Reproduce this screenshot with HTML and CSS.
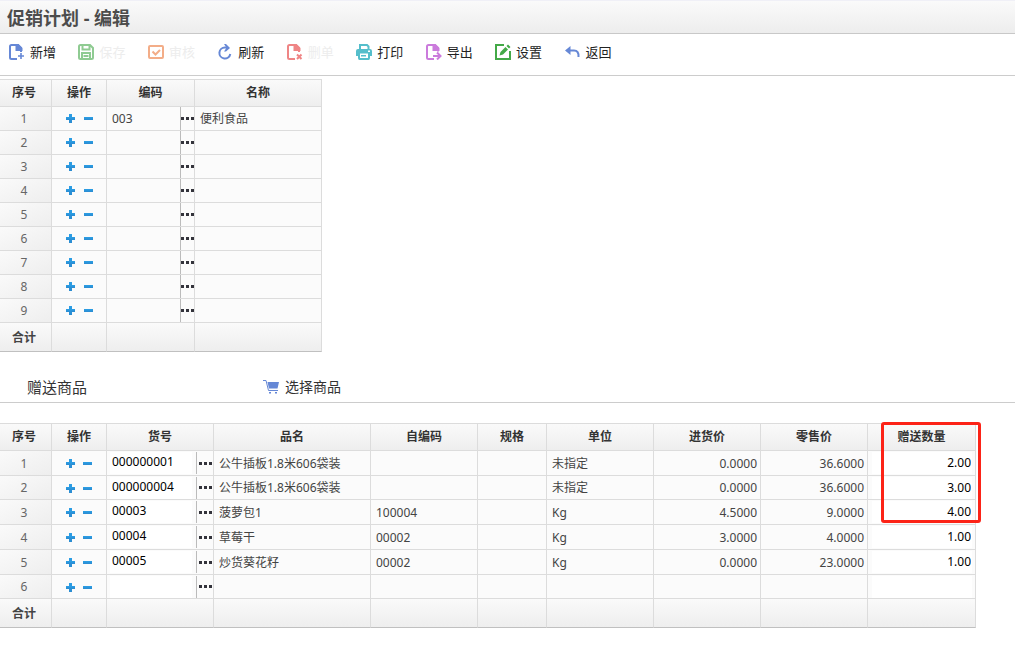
FILE: index.html
```html
<!DOCTYPE html>
<html lang="zh-CN">
  <head>
    <meta charset="UTF-8" />
    <meta name="viewport" content="width=device-width, initial-scale=1.0" />
    <title>促销计划 - 编辑</title>
    <link rel="stylesheet" href="styles.css">
  </head>
  <body>
    <header class="page-header">
      <h1 class="page-title">促销计划 - 编辑</h1>
    </header>

    <nav class="toolbar">
      <div class="toolbar-items">
        <button class="tool" type="button">
          <svg class="icon blue" viewBox="0 0 16 16"><path class="line" d="M8 15H2.500Q1 15 1 13.500V2.500Q1 1 2.500 1H9L12 4V8"/><path d="M6.500 0H9.500L13.500 4V7H6.500zM11.200 9H12.800V11.200H15V12.800H12.800V15H11.200V12.800H9V11.200H11.200z"/></svg>
          新增
        </button>
        <button class="tool" type="button" disabled>
          <svg class="icon green" viewBox="0 0 16 16"><path class="line" d="M2.500 1H12L15 4V13.500Q15 15 13.500 15H2.500Q1 15 1 13.500V2.500Q1 1 2.500 1zM4.500 1V5.500H11.500V1M4 15V9H12V15M5.500 12H10.500"/></svg>
          保存
        </button>
        <button class="tool" type="button" disabled>
          <svg class="icon orange" viewBox="0 0 16 16"><rect class="line" x="1" y="2" width="14" height="12" rx="1"/><path class="line" d="M4.500 7.500L7.500 10.500L12 6"/></svg>
          审核
        </button>
        <button class="tool" type="button">
          <svg class="icon blue" viewBox="0 0 16 16"><path class="line" d="M9.500 3.500H8A5.500 5.500 0 1 0 13.300 10"/><path d="M7 0H9L13 4L9 7.500H7L9 4.500V3z"/></svg>
          刷新
        </button>
        <button class="tool" type="button" disabled>
          <svg class="icon red" viewBox="0 0 16 16"><path class="line" d="M8 15H2.500Q1 15 1 13.500V2.500Q1 1 2.500 1H9L12 4V8M10 10.500L14.500 15M14.500 10.500L10 15"/><path d="M6.500 0H9.500L13.500 4V7H6.500z"/></svg>
          删单
        </button>
        <button class="tool" type="button">
          <svg class="icon teal" viewBox="0 0 16 16"><path class="line" d="M4 5V1H11L12.500 2.500V5"/><path fill-rule="evenodd" d="M2 5H14Q16 5 16 7V12H14V14Q14 16 12.500 16H3.500Q2 16 2 14V12H0V7Q0 5 2 5zM4 9.500V14H12V9.500zM12 6.500V8H14V6.500z"/><path d="M5 11H10V12.500H5z"/></svg>
          打印
        </button>
        <button class="tool" type="button">
          <svg class="icon purple" viewBox="0 0 16 16"><path class="line" d="M8 15H2.500Q1 15 1 13.500V2.500Q1 1 2.500 1H9L12 4V7.500M7 12H13M11 8.500L14.500 12L11 15.500"/><path d="M6.500 0H9.500L13.500 4V7H6.500z"/></svg>
          导出
        </button>
        <button class="tool" type="button">
          <svg class="icon grass" viewBox="0 0 16 16"><path class="line" d="M9 1H1V15H15V7"/><path d="M4.500 11.500L5.500 8L10.500 3L13 5.500L8 10.500zM11.500 2L13 .500L15.500 3L14 4.500z"/></svg>
          设置
        </button>
        <button class="tool" type="button">
          <svg class="icon blue" viewBox="0 0 16 16"><path class="line" d="M4 6.500H9Q14 6.500 13.500 13"/><path d="M0 6.500L5.500 2V11z"/></svg>
          返回
        </button>
      </div>
    </nav>

    <main>
      <div class="grid-wrap">
        <table class="grid">
          <colgroup>
            <col class="col-no"><col class="col-op"><col class="col-code"><col class="col-title">
          </colgroup>
          <thead>
            <tr><th>序号</th><th>操作</th><th>编码</th><th>名称</th></tr>
          </thead>
          <tbody id="category-rows"></tbody>
          <tfoot>
            <tr><th>合计</th><td></td><td></td><td></td></tr>
          </tfoot>
        </table>
      </div>

      <div class="section-bar">
        <h2 class="section-title">赠送商品</h2>
        <button class="pick-button" type="button">
          <svg class="icon blue" viewBox="0 0 16 16"><path class="line thin" d="M0 1.500H3L5.500 11.500H15"/><path d="M4.500 3H16L14.500 9.500H6zM6 13H8V14.500H6zM12 13H14V14.500H12z"/></svg>
          选择商品
        </button>
      </div>

      <div class="grid-wrap">
        <table class="grid goods">
          <colgroup>
            <col class="col-no"><col class="col-op"><col class="col-mid"><col class="col-name"><col class="col-mid"><col class="col-spec"><col class="col-mid"><col class="col-mid"><col class="col-mid"><col class="col-qty">
          </colgroup>
          <thead>
            <tr><th>序号</th><th>操作</th><th>货号</th><th>品名</th><th>自编码</th><th>规格</th><th>单位</th><th>进货价</th><th>零售价</th><th>赠送数量</th></tr>
          </thead>
          <tbody id="goods-rows"></tbody>
          <tfoot>
            <tr><th>合计</th><td></td><td></td><td></td><td></td><td></td><td></td><td></td><td></td><td></td></tr>
          </tfoot>
        </table>
        <div class="highlight"></div>
      </div>
    </main>

    <script>
      const categories = [['003', '便利食品']];
      const goods = [
        ['000000001', '公牛插板1.8米606袋装', '', '', '未指定', '0.0000', '36.6000', '2.00'],
        ['000000004', '公牛插板1.8米606袋装', '', '', '未指定', '0.0000', '36.6000', '3.00'],
        ['00003', '菠萝包1', '100004', '', 'Kg', '4.5000', '9.0000', '4.00'],
        ['00004', '草莓干', '00002', '', 'Kg', '3.0000', '4.0000', '1.00'],
        ['00005', '炒货葵花籽', '00002', '', 'Kg', '0.0000', '23.0000', '1.00'],
      ];

      function rowStart(no, label, code) {
        return `
          <th>${no}</th>
          <td><div class="ops">
            <button class="op add" type="button" aria-label="增加一行"></button>
            <button class="op remove" type="button" aria-label="删除一行"></button>
          </div></td>
          <td class="lookup-cell"><div class="lookup">
            <input type="text" aria-label="${label} ${no}" value="${code}">
            <button class="more" type="button" aria-label="选择${label}"><svg viewBox="0 0 13 3"><path d="M0 0H3V3H0zM5 0H8V3H5zM10 0H13V3H10z"/></svg></button>
          </div></td>`;
      }

      let html = '';
      for (let i = 0; i < 9; i++) {
        const [code, name] = categories[i] || ['', ''];
        html += `<tr>${rowStart(i + 1, '编码', code)}<td>${name}</td></tr>`;
      }
      document.getElementById('category-rows').innerHTML = html;

      html = '';
      for (let i = 0; i < 6; i++) {
        const [code, name, own, spec, unit, cost, price, qty] = goods[i] || Array(8).fill('');
        html += `<tr>${rowStart(i + 1, '货号', code)}
          <td>${name}</td><td>${own}</td><td>${spec}</td><td>${unit}</td>
          <td class="num">${cost}</td><td class="num">${price}</td>
          <td class="qty"><input type="text" aria-label="赠送数量 ${i + 1}" value="${qty}"></td></tr>`;
      }
      document.getElementById('goods-rows').innerHTML = html;
    </script>
  </body>
</html>
```
FILE: styles.css
```css
* {
  margin: 0;
  padding: 0;
  box-sizing: border-box;
}

body {
  font-family: "Noto Sans", "Noto Sans CJK SC", sans-serif;
  font-size: 12px;
  line-height: 16px;
  color: #444;
  background-color: #fff;
}

button,
input {
  font: inherit;
  color: inherit;
  background: none;
  border: none;
}

button {
  cursor: pointer;
}

.page-header {
  height: 34px;
  padding: 2px 7px 0;
  display: flex;
  align-items: center;
  border-top: 1px solid #f0f0f7;
  border-bottom: 1px solid #c8c8c8;
  background-image: linear-gradient(#fafafa, #ededed);
}

.page-title {
  font-size: 18px;
  line-height: 24px;
  color: #4c4c4c;
}

/* toolbar */
.toolbar {
  height: 42px;
  padding: 0 9px 6px;
  display: flex;
  border-bottom: 1px solid #ccc;
}

.toolbar-items {
  flex: 1;
  max-width: 625px;
  display: flex;
}

.tool {
  flex: 1;
  display: flex;
  align-items: center;
  gap: 5px;
  font-size: 13px;
  color: #222;
  white-space: nowrap;
}

.tool:disabled {
  color: #ededed;
  cursor: default;
}

.icon {
  flex: none;
  width: 16px;
  height: 16px;
  fill: currentColor;
}

.line {
  fill: none;
  stroke: currentColor;
  stroke-width: 2;
}

.thin {
  stroke-width: 1;
}

.blue { color: #6688d6; }
.green { color: #8fcb92; }
.orange { color: #f3ad88; }
.red { color: #ef8585; }
.teal { color: #55becb; }
.purple { color: #cb7bdc; }
.grass { color: #43a947; }

/* grids */
.grid-wrap {
  position: relative;
  width: fit-content;
}

.toolbar + main {
  padding-top: 3px;
}

.grid {
  table-layout: fixed;
  width: min-content;
  border-collapse: separate;
  border-spacing: 0;
  border-top: 1px solid #dcdcdc;
}

.col-no { width: 52px; }
.col-op { width: 55px; }
.col-code { width: 88px; }
.col-title { width: 127px; }
.col-mid { width: 107px; }
.col-name { width: 157px; }
.col-spec { width: 69px; }
.col-qty { width: 108px; }

.grid th,
.grid td {
  border-right: 1px solid #dcdcdc;
  border-bottom: 1px solid #dcdcdc;
  white-space: nowrap;
}

.grid td {
  padding: 0 5px;
  background-color: #fbfbfb;
}

.grid th:first-child {
  padding-right: 3px;
}

.grid thead th {
  height: 27px;
  color: #333;
  background-image: linear-gradient(#fafafa, #eee);
}

.grid tbody th {
  height: 24px;
  font-weight: normal;
  color: #666;
  background-image: linear-gradient(to bottom right, #fafafa, #eee);
}

.grid tfoot th,
.grid tfoot td {
  height: 29px;
  padding-top: 2px;
  border-bottom-color: #c0c0c0;
  background-image: linear-gradient(#fafafa, #eee);
}

.goods tbody th {
  height: 25px;
}

.goods tbody tr:nth-child(4n + 2) th {
  height: 24px;
}

.goods tbody th,
.goods tbody td {
  padding-top: 1px;
}

.ops {
  display: flex;
  justify-content: center;
  gap: 9px;
}

.goods .ops {
  gap: 8px;
}

.op {
  width: 9px;
  height: 9px;
  background: linear-gradient(#2b9fe6, #2b8bd0) center / 9px 3px no-repeat;
}

.add {
  background:
    linear-gradient(#2b9fe6, #2b8bd0) center / 9px 3px no-repeat,
    linear-gradient(#2b9fe6, #2b8bd0) center / 3px 9px no-repeat;
}

.grid td.lookup-cell {
  height: 1px;
  padding: 0;
}

.lookup {
  display: flex;
  height: 23px;
}

.lookup input {
  flex: 1;
  min-width: 0;
  padding: 0 5px;
}

.more {
  display: flex;
  align-items: center;
  border-left: 1px solid #bbb;
}

.more svg {
  width: 13px;
  height: 3px;
  fill: #33333b;
}

.goods .lookup {
  height: 22px;
}

.goods .lookup input {
  margin: 0 4px 0 3px;
  padding: 0 2px 2px;
  color: #000;
  background-color: #fff;
}

.goods .more {
  padding: 0 1px 0 2px;
}

.grid td.num {
  padding-right: 3px;
  text-align: right;
}

.grid td.qty {
  padding: 0 3px 0 4px;
}

.qty input {
  display: block;
  width: 100%;
  height: 22px;
  padding: 0 1px 1px 0;
  color: #000;
  text-align: right;
  background-color: #fff;
}

/* red frame over the quantity column */
.highlight {
  position: absolute;
  top: -1px;
  right: -5px;
  width: 100px;
  height: 101px;
  border: 3px solid #fc2317;
  border-radius: 3px;
  pointer-events: none;
}

.section-bar {
  display: flex;
  align-items: flex-end;
  gap: 176px;
  height: 51px;
  margin-bottom: 20px;
  padding: 0 27px 5px;
  border-bottom: 1px solid #ccc;
}

.section-title {
  font-size: 15px;
  font-weight: normal;
  line-height: 20px;
  color: #333;
}

.pick-button {
  display: flex;
  align-items: center;
  gap: 6px;
  font-size: 14px;
  line-height: 20px;
  color: #333;
}
```
